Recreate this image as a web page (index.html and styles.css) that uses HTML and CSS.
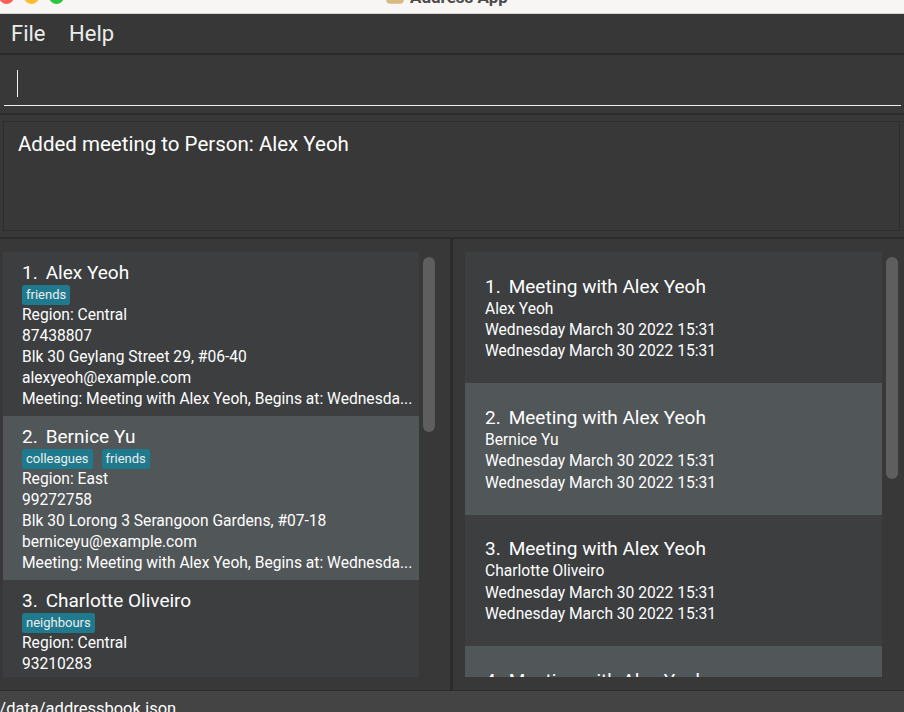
FILE: index.html
```html
<!DOCTYPE html>
<html lang="en">
<head>
<meta charset="utf-8">
<title>Address App</title>
<link rel="stylesheet" href="styles.css">
</head>
<body>
<div class="window">
  <div class="titlebar">
    <div class="lights">
      <span class="light red"></span>
      <span class="light yellow"></span>
      <span class="light green"></span>
    </div>
    <div class="title">
      <svg class="app-icon" width="18" height="18" viewBox="0 0 18 18">
        <rect x="1" y="1" width="16" height="16" rx="2" fill="#f2dcb3" stroke="#b89a6a" stroke-width="1"/>
        <rect x="1" y="13" width="16" height="4" fill="#d9b97f"/>
      </svg>
      <span class="title-text">Address App</span>
    </div>
  </div>

  <div class="menubar">
    <span class="menu">File</span>
    <span class="menu">Help</span>
  </div>

  <div class="command">
    <div class="field"><span class="caret"></span></div>
  </div>

  <div class="result">
    <div class="result-box">Added meeting to Person: Alex Yeoh</div>
  </div>

  <div class="lists">
    <div class="panel panel-left">
      <div class="list list-left">
        <div class="card person odd">
          <div class="name"><span class="idx">1.</span>Alex Yeoh</div>
          <div class="tags"><span class="tag">friends</span></div>
          <div class="line">Region: Central</div>
          <div class="line">87438807</div>
          <div class="line">Blk 30 Geylang Street 29, #06-40</div>
          <div class="line">alexyeoh@example.com</div>
          <div class="line">Meeting: Meeting with Alex Yeoh, Begins at: Wednesda...</div>
        </div>
        <div class="card person even">
          <div class="name"><span class="idx">2.</span>Bernice Yu</div>
          <div class="tags"><span class="tag">colleagues</span><span class="tag">friends</span></div>
          <div class="line">Region: East</div>
          <div class="line">99272758</div>
          <div class="line">Blk 30 Lorong 3 Serangoon Gardens, #07-18</div>
          <div class="line">berniceyu@example.com</div>
          <div class="line">Meeting: Meeting with Alex Yeoh, Begins at: Wednesda...</div>
        </div>
        <div class="card person odd">
          <div class="name"><span class="idx">3.</span>Charlotte Oliveiro</div>
          <div class="tags"><span class="tag">neighbours</span></div>
          <div class="line">Region: Central</div>
          <div class="line">93210283</div>
          <div class="line">Blk 11 Ang Mo Kio Street 74, #11-04</div>
          <div class="line">charlotte@example.com</div>
          <div class="line">Meeting: Meeting with Alex Yeoh, Begins at: Wednesda...</div>
        </div>
      </div>
      <div class="scroll"><div class="thumb thumb-left"></div></div>
    </div>

    <div class="divider"></div>

    <div class="panel panel-right">
      <div class="list list-right">
        <div class="card meeting odd">
          <div class="name"><span class="idx">1.</span>Meeting with Alex Yeoh</div>
          <div class="line">Alex Yeoh</div>
          <div class="line">Wednesday March 30 2022 15:31</div>
          <div class="line">Wednesday March 30 2022 15:31</div>
        </div>
        <div class="card meeting even">
          <div class="name"><span class="idx">2.</span>Meeting with Alex Yeoh</div>
          <div class="line">Bernice Yu</div>
          <div class="line">Wednesday March 30 2022 15:31</div>
          <div class="line">Wednesday March 30 2022 15:31</div>
        </div>
        <div class="card meeting odd">
          <div class="name"><span class="idx">3.</span>Meeting with Alex Yeoh</div>
          <div class="line">Charlotte Oliveiro</div>
          <div class="line">Wednesday March 30 2022 15:31</div>
          <div class="line">Wednesday March 30 2022 15:31</div>
        </div>
        <div class="card meeting even">
          <div class="name"><span class="idx">4.</span>Meeting with Alex Yeoh</div>
          <div class="line">David Li</div>
          <div class="line">Wednesday March 30 2022 15:31</div>
          <div class="line">Wednesday March 30 2022 15:31</div>
        </div>
      </div>
      <div class="scroll"><div class="thumb thumb-right"></div></div>
    </div>
  </div>

  <div class="status"><span class="status-text">./data/addressbook.json</span></div>
</div>
</body>
</html>
```

FILE: styles.css
```css
* { box-sizing: border-box; }

html, body {
  margin: 0;
  padding: 0;
  width: 904px;
  height: 712px;
  overflow: hidden;
  background: #383838;
}

.window {
  width: 904px;
  height: 712px;
  overflow: hidden;
  font-family: Roboto, "Liberation Sans", sans-serif;
  color: #ffffff;
  display: flex;
  flex-direction: column;
}

/* ---------- title bar ---------- */
.titlebar {
  height: 14px;
  flex: none;
  background: #f7f6f5;
  border-bottom: 1px solid #d7d6d5;
  display: flex;
  align-items: flex-start;
  overflow: hidden;
}

.lights {
  display: flex;
  gap: 10px;
  margin-left: -1px;
  margin-top: -11px;
}

.light {
  width: 15px;
  height: 15px;
  border-radius: 50%;
  display: block;
}
.red { background: #fe5f57; }
.yellow { background: #febc2e; }
.green { background: #28c840; }

.title {
  display: flex;
  align-items: flex-start;
  margin-left: 322px;
  gap: 6px;
}

.app-icon {
  display: block;
  margin-top: -14px;
}

.title-text {
  font-size: 17px;
  font-weight: 700;
  line-height: 20px;
  margin-top: -13px;
  color: #4b4b4b;
  white-space: nowrap;
}

/* ---------- menu bar ---------- */
.menubar {
  height: 41px;
  flex: none;
  background: #373737;
  border-bottom: 2px solid #2a2a2a;
  display: flex;
  align-items: center;
  padding-left: 11px;
  gap: 23.5px;
}

.menu {
  font-size: 22px;
  line-height: 26px;
  color: #ececec;
}

/* ---------- command box ---------- */
.command {
  height: 60px;
  flex: none;
  background: #383838;
  border-bottom: 2px solid #2b2b2b;
  padding: 0 3px 0 4px;
}

.field {
  height: 50.5px;
  border-bottom: 1.5px solid #eeeeee;
  padding-left: 13px;
  padding-top: 15px;
}

.caret {
  display: block;
  width: 1px;
  height: 27px;
  background: #f4f4f4;
}

/* ---------- result display ---------- */
.result {
  height: 124px;
  flex: none;
  background: #383838;
  border-bottom: 2px solid #2b2b2b;
  padding: 6px 4px 6px 3px;
}

.result-box {
  height: 110px;
  border: 1px solid #2d2d2d;
  padding: 9.7px 14px 0 14px;
  font-size: 20.5px;
  line-height: 24px;
  color: #ffffff;
}

/* ---------- lists ---------- */
.lists {
  height: 452px;
  flex: none;
  display: flex;
  background: #383838;
  border-bottom: 1px solid #2b2b2b;
}

.panel {
  display: flex;
  gap: 4px;
  padding-top: 13px;
  padding-bottom: 13px;
}

.panel-left {
  width: 450px;
  padding-left: 3px;
}

.panel-right {
  flex: 1;
  padding-left: 12px;
}

.divider {
  width: 3px;
  flex: none;
  background: #2b2b2b;
}

.list {
  height: 425px;
  overflow: hidden;
  flex: none;
}
.list-left { width: 416px; }
.list-right { width: 417px; }

.scroll {
  width: 12px;
  flex: none;
}

.thumb {
  margin-top: 5px;
  width: 12px;
  border-radius: 6px;
  background: #5e5e5e;
}
.thumb-left { height: 175px; }
.thumb-right { height: 222px; }

.card {
  white-space: nowrap;
  overflow: hidden;
}
.odd { background: #3c3e3f; }
.even { background: #515658; }

.person {
  padding: 8.5px 6px 5.5px 19px;
}

.meeting {
  padding: 22.8px 6px 20.9px 20px;
}

.name {
  font-size: 19px;
  line-height: 24px;
  color: #ffffff;
}

.idx {
  margin-right: 8px;
}

.line {
  font-size: 15.6px;
  line-height: 21.2px;
  color: #ffffff;
}

.tags {
  display: flex;
  gap: 9px;
  height: 20px;
}

.tag {
  font-size: 13px;
  line-height: 20px;
  padding: 0 4px;
  background: #1f7a8d;
  border-radius: 2.5px;
  color: #ededed;
}

/* ---------- status bar ---------- */
.status {
  flex: 1;
  background: #444444;
  padding-top: 3px;
  overflow: hidden;
}

.status-text {
  display: block;
  margin-left: -5px;
  font-size: 16.5px;
  line-height: 30px;
  color: #ffffff;
  white-space: nowrap;
}
```
